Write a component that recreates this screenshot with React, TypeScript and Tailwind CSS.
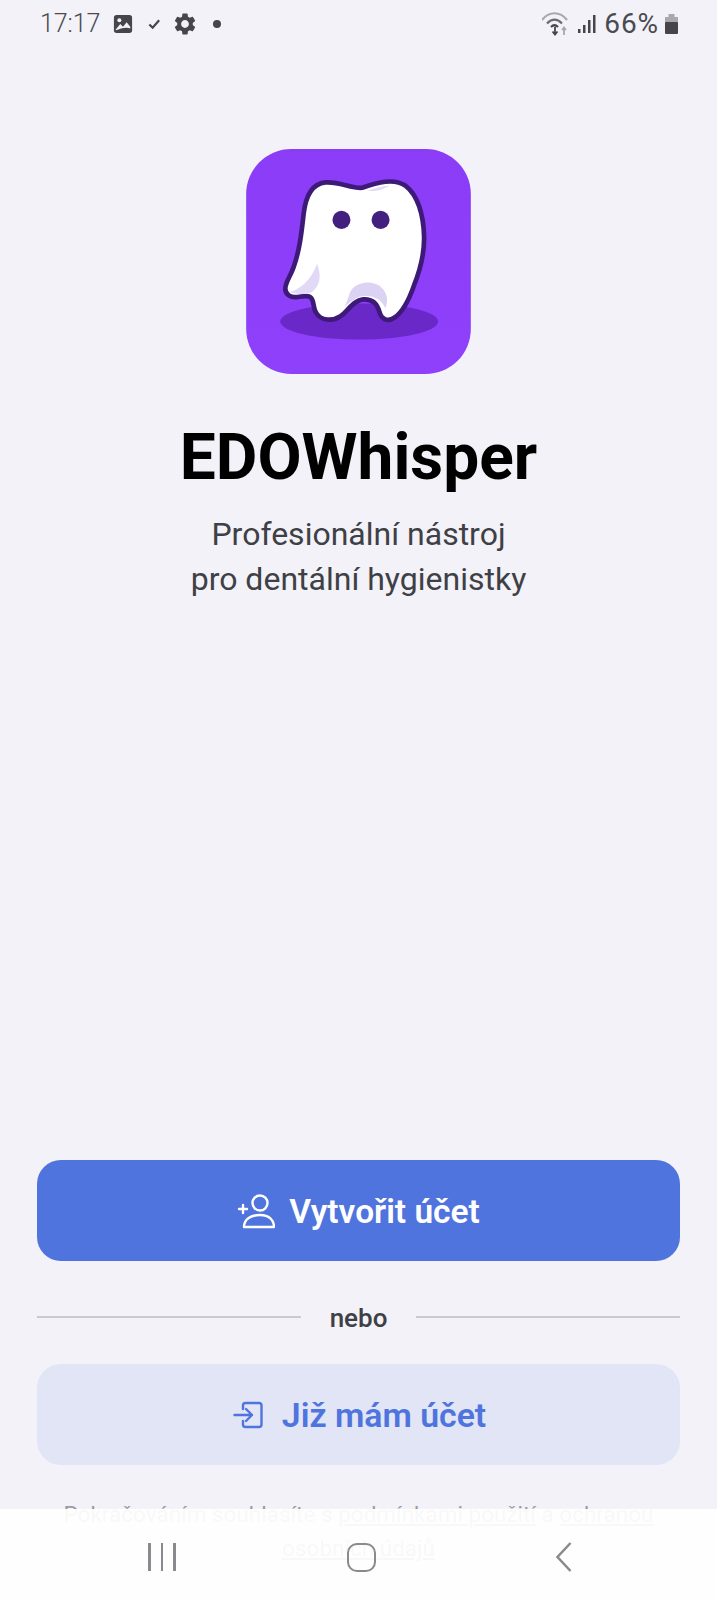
import { MdSettings } from "react-icons/md";

function Logo() {
  return (
    <svg width="225" height="225" viewBox="48 42 672 673" className="block shrink-0">
      <defs>
        <linearGradient id="bg" x1="0" y1="0" x2="0" y2="1">
          <stop offset="0" stopColor="#8a3cf6" />
          <stop offset="1" stopColor="#8f40fb" />
        </linearGradient>
      </defs>
      <rect x="48" y="42" width="672" height="673" rx="135" fill="url(#bg)" />
      <ellipse cx="386" cy="558" rx="236" ry="54" fill="#6a28c9" />
      <path
        d="M395 158 C360 160 325 138 285 142 C245 146 226 185 220 235 C214 290 208 345 190 395 C182 420 165 440 165 460 C166 478 180 487 200 485 C215 483 235 478 243 488 C252 500 248 520 258 533 C272 556 305 558 330 542 C352 527 368 495 398 492 C425 490 440 505 447 530 C453 552 472 560 492 546 C518 528 536 490 550 450 C570 400 582 350 580 300 C578 240 562 180 525 152 C490 128 440 142 395 158 Z"
        fill="#ffffff"
        stroke="#3d1a78"
        strokeWidth="14"
        strokeLinejoin="round"
      />
      <path d="M260 385 C275 425 268 450 245 470 C228 478 205 478 178 470 C205 462 240 440 260 385 Z" fill="#e2d9f6" />
      <path d="M358 472 C372 440 420 432 448 452 C468 468 476 495 464 518 C455 495 432 480 400 482 C385 483 368 492 342 515 C350 498 354 484 358 472 Z" fill="#dcd2f4" />
      <path d="M412 166 C435 160 455 152 478 152 C460 160 440 172 412 166 Z" fill="#e2d9f6" />
      <circle cx="333" cy="254" r="27" fill="#43207f" />
      <circle cx="450" cy="254" r="27" fill="#43207f" />
    </svg>
  );
}

function StatusBar() {
  return (
    <div className="flex h-[48px] shrink-0 items-center justify-between pl-[40px] pr-[38px] text-[#4a4a50]">
      <div className="flex items-center">
        <span className="text-[25px] font-light tracking-[-0.1px]">17:17</span>
        <svg width="20" height="20" viewBox="0 0 22 22" className="ml-[13px]">
          <rect x="1" y="1" width="20" height="20" rx="3" fill="#45454b" />
          <circle cx="7" cy="7" r="2.2" fill="#f2f2f8" />
          <path d="M3 17 L8 11 L11 14 L15 9 L19 14 V16 C15 14 8 16 3 18 Z" fill="#f2f2f8" />
        </svg>
        <svg width="13" height="12" viewBox="0 0 14 12" className="ml-[15px]">
          <path d="M1.500 6.500 L5 10 L12 2" fill="none" stroke="#45454b" strokeWidth="2.400" />
        </svg>
        <MdSettings size={26} color="#45454b" className="ml-[11px]" />
        <div className="ml-[15px] h-[8px] w-[8px] rounded-full bg-[#45454b]" />
      </div>
      <div className="flex items-center">
        <svg width="29" height="26" viewBox="0 0 29 26">
          <path d="M0 9 C7 0 18 0 25 9" fill="none" stroke="#a8a8ae" strokeWidth="2.200" />
          <path d="M5 12.500 C10 7.500 15 7.500 20 12.500" fill="none" stroke="#6a6a70" strokeWidth="2.200" />
          <path d="M9 16 C11.500 13.500 13.500 13.500 16 16" fill="none" stroke="#45454b" strokeWidth="2.200" />
          <path d="M13 16 V23 M10.500 20.500 L13 23.500 L15.500 20.500" fill="none" stroke="#45454b" strokeWidth="1.800" />
          <path d="M22 24 V17 M20 19 L22 16.500 L24 19" fill="none" stroke="#a8a8ae" strokeWidth="1.800" />
        </svg>
        <svg width="18" height="20" viewBox="0 0 18 20" className="ml-[7px]">
          <rect x="0" y="15" width="2.500" height="4" fill="#45454b" />
          <rect x="5" y="11" width="2.500" height="8" fill="#45454b" />
          <rect x="10" y="6" width="2.500" height="13" fill="#45454b" />
          <rect x="15" y="1" width="2.500" height="18" fill="#45454b" />
        </svg>
        <span className="ml-[8px] text-[28px] tracking-[0.9px]">66%</span>
        <svg width="15" height="22" viewBox="0 0 15 22" className="ml-[5px]">
          <rect x="4.500" y="1" width="6" height="3" fill="#a8a8ae" />
          <rect x="1" y="4" width="13" height="6" fill="#a8a8ae" />
          <rect x="1" y="9" width="13" height="12" rx="1" fill="#45454b" />
        </svg>
      </div>
    </div>
  );
}

export default function App() {
  return (
    <div className="relative flex h-[1600px] w-[717px] flex-col overflow-hidden bg-[#f2f2f8] [font-family:Roboto,sans-serif]">
      <StatusBar />

      <div className="flex flex-col items-center pt-[101px]">
        <Logo />
        <h1 className="mt-[49px] text-[64px] leading-[70px] font-bold text-black">EDOWhisper</h1>
        <p className="mt-[19px] text-center text-[32px] leading-[45px] text-[#3f3f46]">
          Profesionální nástroj
          <br />
          pro dentální hygienistky
        </p>
      </div>

      <div className="mt-auto flex flex-col px-[37px] pb-[35px]">
        <button className="flex h-[101px] items-center justify-center gap-[14px] rounded-[24px] bg-[#4f74dd] text-[33.500px] font-semibold text-white">
          <svg width="38" height="36" viewBox="0 0 38 36" fill="none" stroke="#fff" strokeWidth="2.400" strokeLinecap="round">
            <circle cx="23" cy="10" r="7.500" />
            <path d="M7 34 C7 26 14 22 23 22 C32 22 37 27 37 34 Z" strokeLinejoin="round" />
            <path d="M2 16 H10 M6 12 V20" />
          </svg>
          <span className="pt-[3px]">Vytvořit účet</span>
        </button>

        <div className="mt-[41px] flex items-center gap-[29px]">
          <div className="h-[2px] flex-1 bg-[#c9c9d0]" />
          <span className="pt-[2px] text-[26px] leading-[28px] font-medium text-[#3f3f46]">nebo</span>
          <div className="h-[2px] flex-1 bg-[#c9c9d0]" />
        </div>

        <button className="mt-[32px] flex h-[101px] items-center justify-center gap-[19px] rounded-[24px] bg-[#e1e5f5] pl-[2px] text-[33.800px] font-semibold text-[#4f74dd]">
          <svg width="30" height="28" viewBox="0 0 30 28" fill="none" stroke="#4f74dd" strokeWidth="2.400" strokeLinecap="round" strokeLinejoin="round">
            <path d="M10 8 V4.500 C10 3 11 2 12.500 2 H26 C27.500 2 28.500 3 28.500 4.500 V23.500 C28.500 25 27.500 26 26 26 H12.500 C11 26 10 25 10 23.500 V20" />
            <path d="M1.500 14 H19 M13 8 L19 14 L13 20" />
          </svg>
          <span className="pt-[3px]">Již mám účet</span>
        </button>

        <p className="mt-[32px] text-center text-[22.500px] leading-[34px] text-[#9a9aa2]">
          Pokračováním souhlasíte s <span className="underline">podmínkami použití</span> a{" "}
          <span className="underline">ochranou osobních údajů</span>
        </p>
      </div>

      <div className="absolute inset-x-0 bottom-0 h-[91px] bg-white/[.93]">
        <div className="absolute left-[148px] top-[34px] flex gap-[10px]">
          <div className="h-[28px] w-[2.500px] bg-[#8a8a8e]" />
          <div className="h-[28px] w-[2.500px] bg-[#8a8a8e]" />
          <div className="h-[28px] w-[2.500px] bg-[#8a8a8e]" />
        </div>
        <div className="absolute left-[347px] top-[34px] h-[29px] w-[29px] rounded-[10px] border-[2.500px] border-[#8a8a8e]" />
        <svg width="18" height="32" viewBox="0 0 18 32" className="absolute left-[555px] top-[32px]">
          <path d="M15.500 2 L2.500 16 L15.500 30" fill="none" stroke="#8a8a8e" strokeWidth="2.500" />
        </svg>
      </div>
    </div>
  );
}
